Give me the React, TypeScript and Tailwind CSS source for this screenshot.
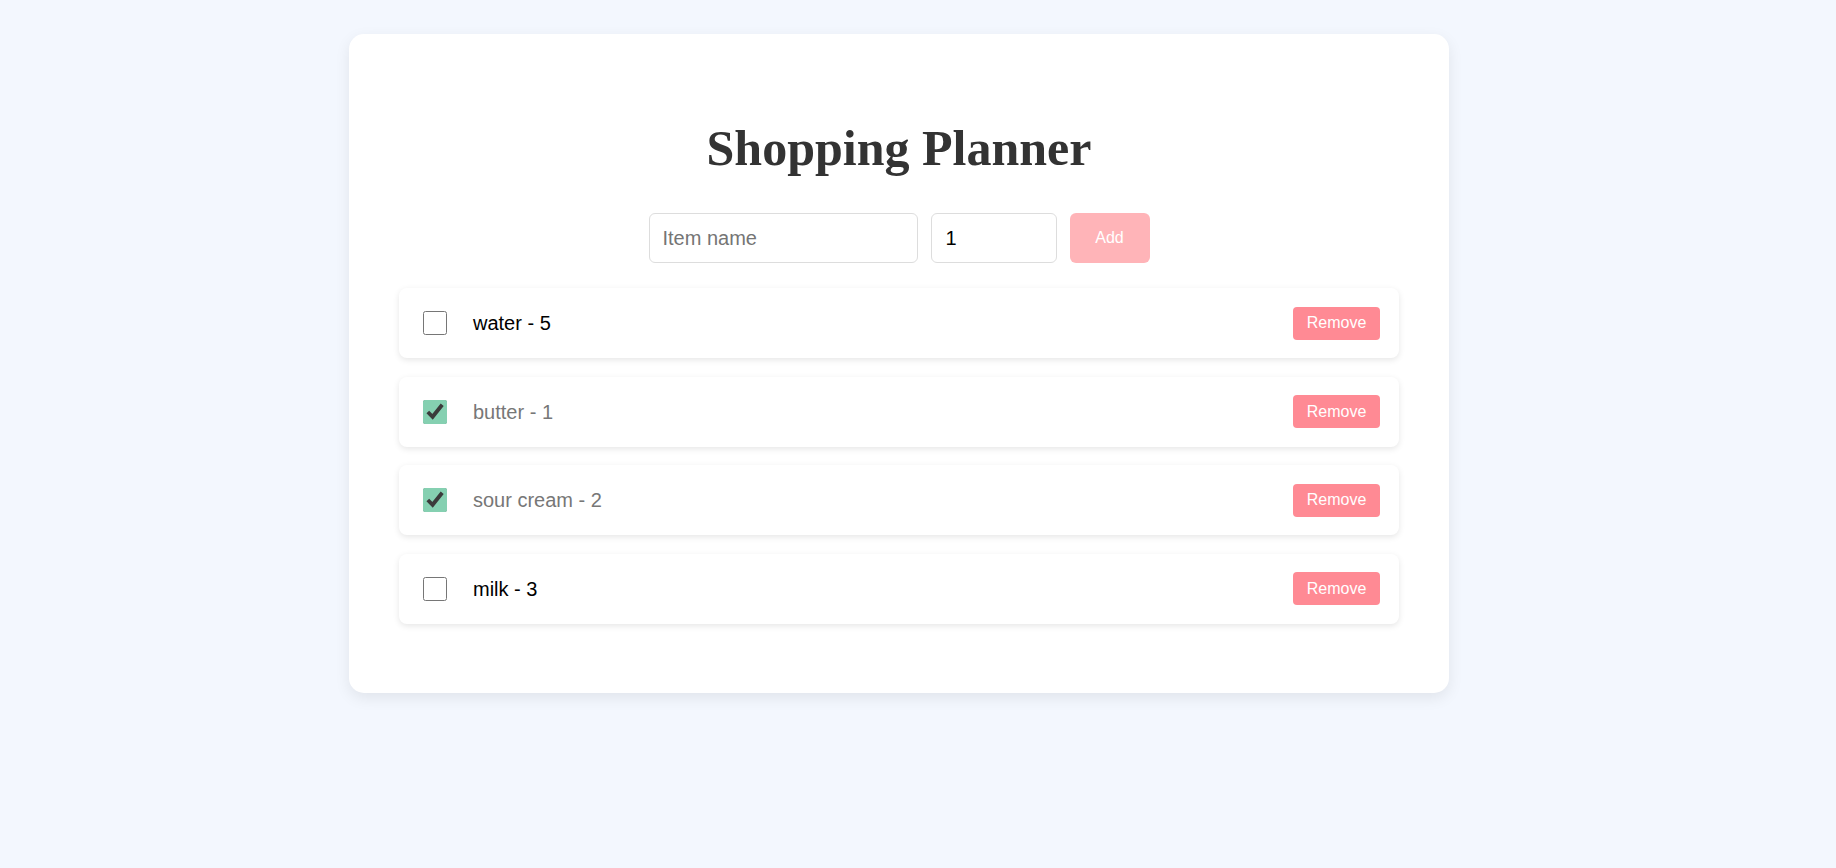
import * as React from "react"

type Item = {
  id: number
  name: string
  qty: number
  done: boolean
}

const initialItems: Item[] = [
  { id: 1, name: "water", qty: 5, done: false },
  { id: 2, name: "butter", qty: 1, done: true },
  { id: 3, name: "sour cream", qty: 2, done: true },
  { id: 4, name: "milk", qty: 3, done: false },
]

function ItemRow({
  item,
  onToggle,
  onRemove,
}: {
  item: Item
  onToggle: () => void
  onRemove: () => void
}) {
  return (
    <li className="mb-[18.67px] flex h-[70px] items-center rounded-[8px] bg-white pl-[24px] pr-[19px] shadow-[0_2px_6px_rgba(0,0,0,0.1)]">
      <input
        type="checkbox"
        checked={item.done}
        onChange={onToggle}
        className="h-[24px] w-[24px] accent-[#85d0b1]"
      />
      <span
        className={
          item.done
            ? "ml-[26px] flex-1 text-[20px] text-[#777777]"
            : "ml-[26px] flex-1 text-[20px] text-black"
        }
      >
        {item.name} - {item.qty}
      </span>
      <button
        onClick={onRemove}
        className="flex h-[33px] w-[87px] items-center justify-center rounded-[4px] bg-[#ff8a94] text-[16px] text-white"
      >
        Remove
      </button>
    </li>
  )
}

export default function App() {
  const [items, setItems] = React.useState<Item[]>(initialItems)
  const [name, setName] = React.useState("")
  const [qty, setQty] = React.useState("1")

  const addItem = () => {
    if (!name.trim()) return
    setItems((prev) => [
      ...prev,
      { id: Date.now(), name: name.trim(), qty: Number(qty) || 1, done: false },
    ])
    setName("")
    setQty("1")
  }

  return (
    <div className="min-h-[868px] bg-[#f3f7fe] pt-[34px] font-['Liberation_Sans',Arial,sans-serif]">
      <div className="flex justify-center pr-[38px]">
        <div className="w-[1100px] rounded-[15px] bg-white p-[50px] shadow-[0_5px_15px_rgba(0,0,0,0.08)]">
          <h1 className="mb-[36px] mt-[36px] text-center font-['Liberation_Serif','Times_New_Roman',serif] text-[50px] font-bold leading-[57px] text-[#333333]">
            Shopping Planner
          </h1>

          <div className="mb-[25px] flex justify-center gap-[13px]">
            <input
              type="text"
              placeholder="Item name"
              value={name}
              onChange={(e) => setName(e.target.value)}
              className="h-[50px] w-[269px] rounded-[6px] border border-[#dddddd] px-[13px] text-[20px] text-black outline-none placeholder:text-[#757575]"
            />
            <input
              type="number"
              value={qty}
              onChange={(e) => setQty(e.target.value)}
              className="h-[50px] w-[126px] rounded-[6px] border border-[#dddddd] px-[14px] text-[20px] text-black outline-none"
            />
            <button
              onClick={addItem}
              disabled={!name.trim()}
              className="h-[50px] w-[80px] rounded-[6px] bg-[#ffb4b8] text-[16px] text-white"
            >
              Add
            </button>
          </div>

          <ul>
            {items.map((item) => (
              <ItemRow
                key={item.id}
                item={item}
                onToggle={() =>
                  setItems((prev) =>
                    prev.map((i) => (i.id === item.id ? { ...i, done: !i.done } : i))
                  )
                }
                onRemove={() =>
                  setItems((prev) => prev.filter((i) => i.id !== item.id))
                }
              />
            ))}
          </ul>
        </div>
      </div>
    </div>
  )
}
